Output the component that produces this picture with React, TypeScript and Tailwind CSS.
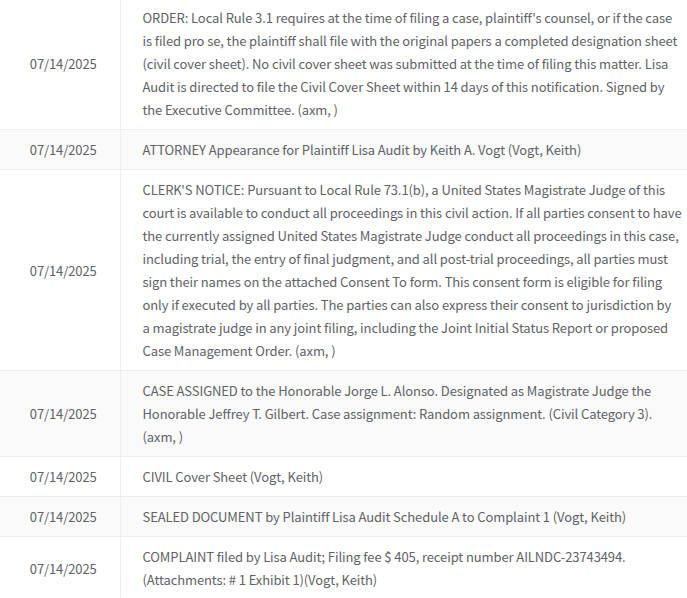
import React from 'react';

type Entry = { date: string; lines: string[] };

const ENTRIES: Entry[] = [
    {
        date: '07/14/2025',
        lines: [
            "ORDER: Local Rule 3.1 requires at the time of filing a case, plaintiff's counsel, or if the case",
            'is filed pro se, the plaintiff shall file with the original papers a completed designation sheet',
            '(civil cover sheet). No civil cover sheet was submitted at the time of filing this matter. Lisa',
            'Audit is directed to file the Civil Cover Sheet within 14 days of this notification. Signed by',
            'the Executive Committee. (axm, )',
        ],
    },
    {
        date: '07/14/2025',
        lines: ['ATTORNEY Appearance for Plaintiff Lisa Audit by Keith A. Vogt (Vogt, Keith)'],
    },
    {
        date: '07/14/2025',
        lines: [
            "CLERK'S NOTICE: Pursuant to Local Rule 73.1(b), a United States Magistrate Judge of this",
            'court is available to conduct all proceedings in this civil action. If all parties consent to have',
            'the currently assigned United States Magistrate Judge conduct all proceedings in this case,',
            'including trial, the entry of final judgment, and all post-trial proceedings, all parties must',
            'sign their names on the attached Consent To form. This consent form is eligible for filing',
            'only if executed by all parties. The parties can also express their consent to jurisdiction by',
            'a magistrate judge in any joint filing, including the Joint Initial Status Report or proposed',
            'Case Management Order. (axm, )',
        ],
    },
    {
        date: '07/14/2025',
        lines: [
            'CASE ASSIGNED to the Honorable Jorge L. Alonso. Designated as Magistrate Judge the',
            'Honorable Jeffrey T. Gilbert. Case assignment: Random assignment. (Civil Category 3).',
            '(axm, )',
        ],
    },
    { date: '07/14/2025', lines: ['CIVIL Cover Sheet (Vogt, Keith)'] },
    {
        date: '07/14/2025',
        lines: ['SEALED DOCUMENT by Plaintiff Lisa Audit Schedule A to Complaint 1 (Vogt, Keith)'],
    },
    {
        date: '07/14/2025',
        lines: [
            'COMPLAINT filed by Lisa Audit; Filing fee $ 405, receipt number AILNDC-23743494.',
            '(Attachments: # 1 Exhibit 1)(Vogt, Keith)',
        ],
    },
];

const App: React.FC = () => {
    return (
        <div
            className="w-[687px] h-[598px] overflow-hidden bg-white text-[#606266] text-[13px] leading-[23px] tracking-[-0.1px]"
            style={{ fontFamily: '"Noto Sans CJK SC", "Liberation Sans", sans-serif' }}
        >
            <table className="-mt-[2px] w-full border-collapse table-fixed">
                <colgroup>
                    <col className="w-[120px]" />
                    <col />
                </colgroup>
                <tbody>
                    {ENTRIES.map((entry, index) => (
                        <tr key={index} className={index % 2 === 1 ? 'bg-[#fafafa]' : 'bg-white'}>
                            {/* date column */}
                            <td className="border-b border-r border-[#ebeef5] py-2 pl-[17px] pr-[10px] text-center align-middle">
                                {entry.date}
                            </td>
                            <td className="border-b border-[#ebeef5] py-2 pl-[22px] pr-[10px] align-middle whitespace-nowrap">
                                {entry.lines.map((line, i) => (
                                    <div key={i}>{line}</div>
                                ))}
                            </td>
                        </tr>
                    ))}
                </tbody>
            </table>
        </div>
    );
};

export default App;
